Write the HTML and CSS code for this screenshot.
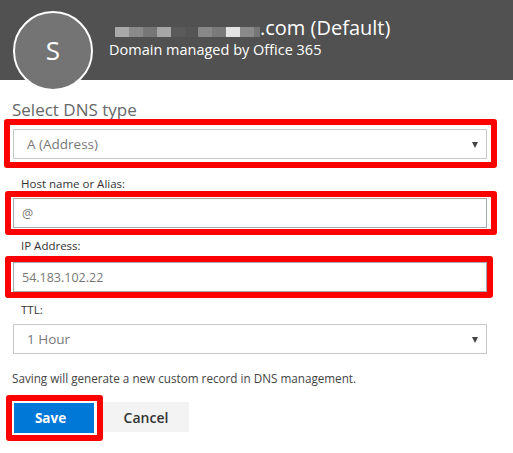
FILE: index.html
```html
<!DOCTYPE html>
<html lang="en">
<head>
<meta charset="utf-8">
<title>Add DNS record</title>
<link rel="stylesheet" href="styles.css">
</head>
<body>
<header class="header">
  <div class="avatar">S</div>
  <div class="domain">
    <div class="domain-title"><span class="mask"><i class="m m1"></i><i class="m m2"></i><i class="m m3"></i><i class="m m4"></i><i class="m m5"></i><i class="m m6"></i><i class="m m7"></i><i class="m m8"></i><i class="m m9"></i><i class="m m10"></i><i class="m m11"></i></span><span class="domain-name">.com (Default)</span></div>
    <div class="domain-sub">Domain managed by Office 365</div>
  </div>
</header>
<main class="form">
  <div class="section-title">Select DNS type</div>
  <div class="mark mark-type">
    <div class="select">A (Address)<span class="caret"></span></div>
  </div>
  <div class="label label-host">Host name or Alias:</div>
  <div class="mark mark-host">
    <div class="input">@</div>
  </div>
  <div class="label label-ip">IP Address:</div>
  <div class="mark mark-ip">
    <div class="input">54.183.102.22</div>
  </div>
  <div class="label label-ttl">TTL:</div>
  <div class="select select-ttl">1 Hour<span class="caret"></span></div>
  <p class="note">Saving will generate a new custom record in DNS management.</p>
  <div class="actions">
    <div class="mark mark-save"><button class="btn btn-primary">Save</button></div>
    <button class="btn btn-cancel">Cancel</button>
  </div>
</main>
</body>
</html>
```
FILE: styles.css
```css
* { box-sizing: border-box; }
html, body { margin: 0; padding: 0; background: #fff; }
body { font-family: "Open Sans", "Noto Sans", sans-serif; color: #333; width: 513px; }

.header {
  height: 80px;
  background: #515151;
  display: flex;
  align-items: flex-start;
  padding: 11px 0 0 13px;
}
.avatar {
  position: relative;
  z-index: 1;
  flex: 0 0 auto;
  width: 80px;
  height: 80px;
  border-radius: 50%;
  border: 2px solid #fff;
  background: #747474;
  color: #fff;
  font-size: 26px;
  display: flex;
  align-items: center;
  justify-content: center;
  padding-bottom: 2px;
}
.domain { margin: 5px 0 0 16px; color: #fff; }
.domain-title {
  display: flex;
  align-items: flex-end;
  font-size: 20px;
  line-height: 24px;
  height: 24px;
  white-space: nowrap;
}
.mask { display: flex; margin: 0 0 3px 6px; height: 10px; }
.m { display: block; width: 14px; height: 10px; }
.m1 { background: #a9a9a9; }
.m2 { background: #8a8a8a; }
.m3 { background: #767676; }
.m4 { background: #a6a6a6; }
.m5 { background: #5a5a5a; }
.m6 { background: #555555; width: 13px; }
.m7 { background: #888888; }
.m8 { background: #7a7a7a; }
.m9 { background: #e4e4e4; }
.m10 { background: #8a8a8a; }
.m11 { background: #767676; width: 6px; }
.domain-sub { font-size: 14.5px; line-height: 20px; white-space: nowrap; }

.form { display: flex; flex-direction: column; align-items: flex-start; }
.section-title {
  margin: 21px 0 0 12px;
  font-size: 17px;
  line-height: 18px;
  color: #686868;
}
.mark { border: 6px solid #ff0000; border-radius: 3px; }
.mark-type { margin-left: 4px; width: 493px; padding: 4px 4px 3px 3px; }
.mark-host { margin: 0 0 0 5px; width: 492px; padding: 1px 4px 1px 2px; }
.mark-ip { margin: 3px 0 0 5px; width: 488px; padding: 0 0 0 2px; }

.select, .input {
  width: 474px;
  height: 30px;
  border: 1px solid #c8c8c8;
  font-size: 12.5px;
  color: #777;
  display: flex;
  align-items: center;
  position: relative;
}
.select { padding-left: 13px; font-size: 13.5px; }
.input { padding-left: 8px; border-color: #a5abab; }
.caret {
  position: absolute;
  right: 8px;
  top: 12px;
  width: 0;
  height: 0;
  border-left: 3.5px solid transparent;
  border-right: 3.5px solid transparent;
  border-top: 6px solid #444;
}
.select-ttl { margin: 7px 0 0 13px; }

.label { font-size: 11.5px; line-height: 14px; color: #333; margin-left: 21px; }
.label-host { margin-top: 9px; }
.label-ip { margin-top: 4px; }
.label-ttl { margin-top: 5px; }

.note {
  margin: 17px 0 0 12px;
  font-size: 11.7px;
  line-height: 14px;
  color: #444;
}
.actions { display: flex; align-items: flex-start; margin: 10px 0 0 6px; }
.mark-save { padding: 2px 3px 2px 2px; }
.btn {
  height: 30px;
  border: 0;
  font-family: inherit;
  padding: 0;
  margin: 0;
}
.btn-primary { width: 80px; background: #0078d7; color: #fff; font-weight: 700; font-size: 13.5px; display: block; padding-right: 7px; }
.btn-cancel { width: 86px; margin-top: 7px; background: #f3f3f3; color: #333; font-weight: 600; font-size: 14px; }
```
